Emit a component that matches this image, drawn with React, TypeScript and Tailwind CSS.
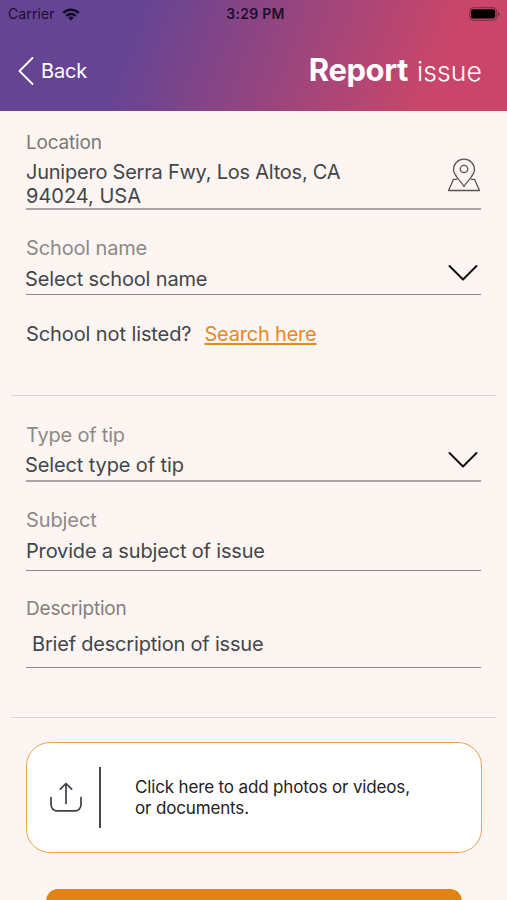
import React from 'react';

const MapPinIcon: React.FC = () => (
    <svg width="34" height="34" viewBox="0 0 34 34" fill="none" stroke="#55555a" strokeWidth="1.3" strokeLinejoin="round">
        <path d="M17 28.5C14.8 24 6.5 18 6.5 11.6a10.5 10.5 0 0 1 21 0C27.5 18 19.2 24 17 28.5Z" />
        <circle cx="17" cy="11" r="3.7" />
        <path d="M10.2 21.3H6.5L1.5 32.5h31l-5-11.2h-3.7" />
    </svg>
);

const ChevronIcon: React.FC = () => (
    <svg width="32" height="18" viewBox="0 0 32 18" fill="none" stroke="#111" strokeWidth="2" strokeLinecap="round" strokeLinejoin="round">
        <path d="M2.5 2 16 15.5 29.5 2" />
    </svg>
);

const UploadIcon: React.FC = () => (
    <svg width="32" height="30" viewBox="0 0 32 30" fill="none" stroke="#3d4045" strokeWidth="1.7" strokeLinecap="round" strokeLinejoin="round">
        <path d="M1 15.5v7.3a6 6 0 0 0 6 6h18a6 6 0 0 0 6-6v-7.3" />
        <path d="M16 21.5V1.5M10.3 7.2 16 1.5l5.7 5.7" />
    </svg>
);

const StatusBar: React.FC = () => (
    <div className="grid h-7 grid-cols-3 items-center pl-2 pr-[7px] text-[14px] leading-none text-[#1b0e2c]">
        <div className="flex items-center gap-[7px]">
            <span className="tracking-[0.1px]">Carrier</span>
            <svg width="18" height="13" viewBox="0 0 18 13" fill="none" stroke="#120a20" strokeWidth="2.4">
                <path d="M1.2 5a11 11 0 0 1 15.6 0" />
                <path d="M4.2 8a6.8 6.8 0 0 1 9.6 0" />
                <path d="M9 12.5 6.3 9.7a3.9 3.9 0 0 1 5.4 0Z" fill="#120a20" stroke="none" />
            </svg>
        </div>
        <span className="whitespace-nowrap pl-[3px] text-center font-semibold tracking-[0.3px]">3:29 PM</span>
        <svg className="justify-self-end" width="32" height="14" viewBox="0 0 32 14">
            <rect x="1.7" y="0.7" width="27" height="12.6" rx="3.5" fill="none" stroke="#7a2b45" strokeWidth="1" />
            <rect x="3" y="2.3" width="24.2" height="9.2" rx="2" fill="#000" />
            <path d="M30 5v4.4a2.4 2.4 0 0 0 0-4.4Z" fill="#7a2b45" />
        </svg>
    </div>
);

const App: React.FC = () => {
    return (
        <div className="h-[900px] w-[507px] overflow-hidden bg-[#fcf5f2] font-['Inter',sans-serif] text-[20px] leading-6 tracking-[-0.2px] text-[#42464b]">
            <header className="h-[110.5px] bg-[linear-gradient(110deg,#654494_0%,#654494_26%,#c9466a_84%,#c9466a_100%)]">
                <StatusBar />
                <div className="flex h-[86px] items-center justify-between pl-[18px] pr-[25px] text-white">
                    <button className="flex items-center gap-[7px]">
                        <svg width="16" height="28" viewBox="0 0 16 28" fill="none" stroke="#fff" strokeWidth="1.8" strokeLinecap="round" strokeLinejoin="round">
                            <path d="M14.5 1 1.5 14l13 13" />
                        </svg>
                        <span>Back</span>
                    </button>
                    <h1 className="mb-[2px] flex items-baseline gap-[9px] text-[27px] leading-8">
                        <span className="text-[31px] font-bold tracking-[-0.4px]">Report</span>
                        <span className="text-[26.5px] font-[350] tracking-[0.1px]">issue</span>
                    </h1>
                </div>
            </header>

            <form>
                <div className="mx-[26px] flex h-[99px] items-end justify-between border-b-2 border-[#aba5a4]">
                    <div className="flex h-[77px] flex-col">
                        <label className="mb-[5px] text-[19px] leading-6 text-[#7d7875]">Location</label>
                        <p className="w-[340px] leading-[24.5px] tracking-[-0.23px]">
                            Junipero Serra Fwy, Los Altos, CA
                            <br />
                            <span className="tracking-normal">94024, USA</span>
                        </p>
                    </div>
                    <div className="mb-[16px]">
                        <MapPinIcon />
                    </div>
                </div>

                <div className="mx-[26px] flex h-[85px] items-end justify-between border-b border-[#8f8a89]">
                    <div className="flex h-[58px] flex-col">
                        <label className="mb-[7px] tracking-[-0.15px] text-[#8f8986]">School name</label>
                        <span className="-ml-px tracking-[-0.15px]">Select school name</span>
                    </div>
                    <div className="mb-[12px] mr-[2px]">
                        <ChevronIcon />
                    </div>
                </div>

                <div className="mx-[26px] flex h-[100px] items-start gap-[13px] pt-[27px]">
                    <span className="tracking-[-0.1px]">School not listed?</span>
                    <a className="tracking-[-0.2px] text-[#e48a1f] underline decoration-[1.5px] underline-offset-[2px]">Search here</a>
                </div>

                <div className="mx-[11px] border-t border-[#dad4d2]" />

                <div className="mx-[26px] flex h-[86px] items-end justify-between border-b-2 border-[#aba5a4]">
                    <div className="flex h-[57px] flex-col">
                        <label className="mb-[6px] text-[#8f8986]">Type of tip</label>
                        <span className="-ml-px tracking-[-0.12px]">Select type of tip</span>
                    </div>
                    <div className="mb-[11px] mr-[2px]">
                        <ChevronIcon />
                    </div>
                </div>

                <div className="mx-[26px] flex h-[89px] flex-col border-b border-[#8f8a89] pt-[26px]">
                    <label className="mb-[7px] tracking-[-0.1px] text-[#8f8986]">Subject</label>
                    <span className="tracking-[-0.17px]">Provide a subject of issue</span>
                </div>

                <div className="mx-[26px] flex h-[97px] flex-col border-b border-[#8f8a89] pt-[26px]">
                    <label className="mb-[11px] text-[19px] text-[#84807d]">Description</label>
                    <span className="pl-[6px]">Brief description of issue</span>
                </div>

                <div className="mx-[11px] mt-[49px] border-t border-[#dad4d2]" />

                <button
                    type="button"
                    className="mx-[26px] mt-[24px] flex h-[111px] w-[456px] items-center rounded-[24px] border-[1.5px] border-[#e5a552] bg-white pl-[23px] text-left"
                >
                    <UploadIcon />
                    <span className="ml-[17px] h-[61px] w-[2px] bg-[#45484d]" />
                    <span className="ml-[34px] pt-px text-[17px] leading-[20.5px] tracking-[-0.15px] text-[#222]">
                        Click here to add photos or videos,
                        <br />
                        or documents.
                    </span>
                </button>

                <div className="mx-[46px] mt-[36px] h-[60px] w-[416px] rounded-[12px] bg-[#e28413]" />
            </form>
        </div>
    );
};

export default App;
